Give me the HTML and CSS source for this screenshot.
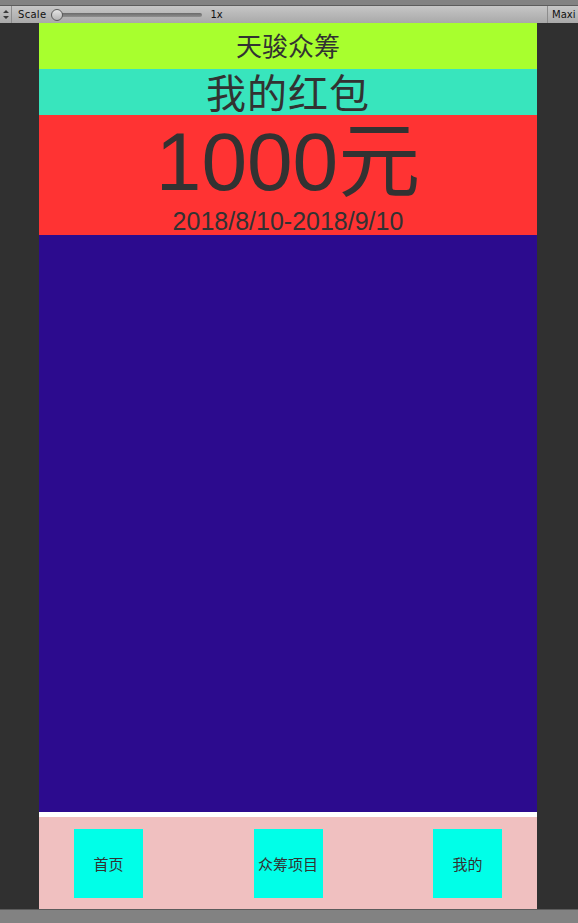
FILE: index.html
```html
<!DOCTYPE html>
<html lang="zh">
<head>
<meta charset="utf-8">
<title>天骏众筹</title>
<link rel="stylesheet" href="styles.css">
</head>
<body>
<div class="topstrip"></div>
<div class="toolbar">
  <div class="tb-left">
    <svg class="arrows" width="6" height="9" viewBox="0 0 6 9"><path d="M3 0 L6 3 L0 3 Z M3 9 L6 6 L0 6 Z" fill="#3a3a3a"/></svg>
  </div>
  <span class="tb-label">Scale</span>
  <div class="slider"><div class="track"></div><div class="knob"></div></div>
  <span class="tb-value">1x</span>
  <div class="tb-spacer"></div>
  <div class="tb-right">Maxi</div>
</div>
<div class="stage">
  <div class="phone">
    <div class="title">天骏众筹</div>
    <div class="subtitle">我的红包</div>
    <div class="packet">
      <div class="amount">1000元</div>
      <div class="period">2018/8/10-2018/9/10</div>
    </div>
    <div class="content"></div>
    <div class="divider"></div>
    <nav class="nav">
      <div class="nav-btn">首页</div>
      <div class="nav-btn">众筹项目</div>
      <div class="nav-btn">我的</div>
    </nav>
  </div>
</div>
<div class="bottomstrip"></div>
</body>
</html>
```
FILE: styles.css
```css
* { box-sizing: border-box; }
html, body {
  margin: 0;
  padding: 0;
}
body {
  width: 578px;
  height: 923px;
  overflow: hidden;
  background: #303030;
  font-family: "Liberation Sans", "Noto Sans CJK SC", sans-serif;
  color: #323232;
}
.topstrip {
  height: 6px;
  background: #828282;
  border-bottom: 1px solid #5c5c5c;
}
.toolbar {
  height: 17px;
  display: flex;
  align-items: center;
  background: linear-gradient(#c6c6c6, #a9a9a9);
  font-family: "DejaVu Sans", sans-serif;
  font-size: 10px;
  color: #111;
  white-space: nowrap;
  overflow: hidden;
}
.tb-left {
  width: 12px;
  height: 17px;
  display: flex;
  align-items: center;
  justify-content: center;
  border-right: 1px solid #8c8c8c;
}
.tb-label {
  margin-left: 6px;
  letter-spacing: 0.3px;
}
.slider {
  position: relative;
  width: 150px;
  height: 12px;
  margin-left: 6px;
  display: flex;
  align-items: center;
}
.track {
  width: 100%;
  height: 4px;
  border-radius: 2px;
  background: linear-gradient(#6a6a6a, #8e8e8e);
}
.knob {
  position: absolute;
  left: -1px;
  top: 0;
  width: 12px;
  height: 12px;
  border-radius: 50%;
  border: 1px solid #5a5a5a;
  background: linear-gradient(#e4e4e4, #b4b4b4);
}
.tb-value {
  margin-left: 8px;
}
.tb-spacer { flex: 1; }
.tb-right {
  width: 31px;
  height: 17px;
  padding-left: 4px;
  line-height: 17px;
  border-left: 1px solid #8c8c8c;
}
.stage {
  height: 886px;
  display: flex;
}
.phone {
  width: 498px;
  margin-left: 39px;
  display: flex;
  flex-direction: column;
}
.title {
  height: 46px;
  padding-bottom: 4px;
  background: #a8ff2e;
  display: flex;
  align-items: center;
  justify-content: center;
  font-family: "Noto Sans CJK SC", sans-serif;
  font-size: 26px;
}
.subtitle {
  height: 46px;
  padding-bottom: 3px;
  background: #38e5bd;
  display: flex;
  align-items: center;
  justify-content: center;
  font-family: "Noto Sans CJK SC", sans-serif;
  font-size: 40px;
  letter-spacing: 1px;
}
.packet {
  height: 120px;
  background: #ff3333;
  text-align: center;
  padding-top: 6px;
}
.amount {
  font-size: 82px;
  line-height: 82px;
  height: 82px;
}
.period {
  margin-top: 6px;
  font-size: 25px;
  line-height: 25px;
}
.content {
  flex: 1;
  background: #2c0b8e;
}
.divider {
  height: 5px;
  background: #ffffff;
}
.nav {
  height: 92px;
  background: #f0c0c0;
  display: flex;
  align-items: center;
  justify-content: space-between;
  padding: 0 35px;
}
.nav-btn {
  width: 69px;
  height: 69px;
  background: #00ffe8;
  display: flex;
  align-items: center;
  justify-content: center;
  font-family: "Noto Sans CJK SC", sans-serif;
  font-size: 15px;
  white-space: nowrap;
}
.bottomstrip {
  height: 14px;
  background: #828282;
  border-top: 1px solid #5c5c5c;
}
```
